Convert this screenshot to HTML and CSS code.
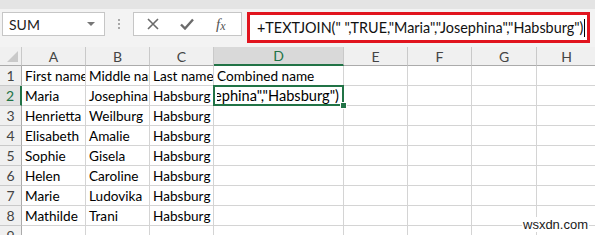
FILE: index.html
```html
<!DOCTYPE html>
<html lang="en">
  <head>
    <meta charset="UTF-8" />
    <title>TEXTJOIN</title>
    <link rel="stylesheet" href="styles.css">
  </head>
  <body>
    <div class="ribbon-edge"></div>
    <div class="toolbar">
      <div class="name-box">
        <span>SUM</span>
        <span class="drop"></span>
      </div>
      <div class="grip"><i></i><i></i><i></i></div>
      <div class="buttons">
        <svg class="btn" width="12" height="12" viewBox="0 0 12 12">
          <path d="M1 1 L11 11 M11 1 L1 11" stroke="#6b6b6b" stroke-width="1.6" fill="none" />
        </svg>
        <svg class="btn" width="14" height="12" viewBox="0 0 14 12">
          <path d="M1 6.5 L5 10.5 L13 1.5" stroke="#6b6b6b" stroke-width="2.4" fill="none" />
        </svg>
        <span class="fx"><i>f</i><small>x</small></span>
      </div>
      <div class="formula">
        <span>+TEXTJOIN(" ",TRUE,"Maria","Josephina","Habsburg")</span><span class="caret"></span>
      </div>
    </div>

    <div class="sheet">
      <div class="corner"></div>
      <div class="col-head">A</div>
      <div class="col-head">B</div>
      <div class="col-head">C</div>
      <div class="col-head sel">D</div>
      <div class="col-head">E</div>
      <div class="col-head">F</div>
      <div class="col-head">G</div>
      <div class="col-head">H</div>

      <div class="row-head">1</div>
      <div class="cell">First name</div>
      <div class="cell">Middle name</div>
      <div class="cell">Last name</div>
      <div class="cell">Combined name</div>
      <div class="cell"></div><div class="cell"></div><div class="cell"></div><div class="cell"></div>

      <div class="row-head sel">2</div>
      <div class="cell">Maria</div>
      <div class="cell">Josephina</div>
      <div class="cell">Habsburg</div>
      <div class="cell active">
        <div class="edit"><span>+TEXTJOIN(" ",TRUE,"Maria","Josephina","Habsburg")</span></div>
        <span class="handle"></span>
      </div>
      <div class="cell"></div><div class="cell"></div><div class="cell"></div><div class="cell"></div>

      <div class="row-head">3</div>
      <div class="cell">Henrietta</div>
      <div class="cell">Weilburg</div>
      <div class="cell">Habsburg</div>
      <div class="cell"></div><div class="cell"></div><div class="cell"></div><div class="cell"></div><div class="cell"></div>

      <div class="row-head">4</div>
      <div class="cell">Elisabeth</div>
      <div class="cell">Amalie</div>
      <div class="cell">Habsburg</div>
      <div class="cell"></div><div class="cell"></div><div class="cell"></div><div class="cell"></div><div class="cell"></div>

      <div class="row-head">5</div>
      <div class="cell">Sophie</div>
      <div class="cell">Gisela</div>
      <div class="cell">Habsburg</div>
      <div class="cell"></div><div class="cell"></div><div class="cell"></div><div class="cell"></div><div class="cell"></div>

      <div class="row-head">6</div>
      <div class="cell">Helen</div>
      <div class="cell">Caroline</div>
      <div class="cell">Habsburg</div>
      <div class="cell"></div><div class="cell"></div><div class="cell"></div><div class="cell"></div><div class="cell"></div>

      <div class="row-head">7</div>
      <div class="cell">Marie</div>
      <div class="cell">Ludovika</div>
      <div class="cell">Habsburg</div>
      <div class="cell"></div><div class="cell"></div><div class="cell"></div><div class="cell"></div><div class="cell"></div>

      <div class="row-head">8</div>
      <div class="cell">Mathilde</div>
      <div class="cell">Trani</div>
      <div class="cell">Habsburg</div>
      <div class="cell"></div><div class="cell"></div><div class="cell"></div><div class="cell"></div><div class="cell"></div>

      <div class="row-head">9</div>
      <div class="cell"></div><div class="cell"></div><div class="cell"></div><div class="cell"></div>
      <div class="cell"></div><div class="cell"></div><div class="cell"></div><div class="cell"></div>
    </div>

    <div class="watermark">wsxdn.com</div>
  </body>
</html>
```

FILE: styles.css
```css
body {
  margin: 0;
  width: 595px;
  height: 235px;
  overflow: hidden;
  position: relative;
  background-color: #ffffff;
  font-family: "Lato", "Liberation Sans", sans-serif;
  color: #000;
}

/* Formula bar */
.ribbon-edge {
  height: 9px;
  background-color: #e4e4e4;
}

.toolbar {
  height: 38px;
  background-color: #f3f3f3;
  display: flex;
  align-items: flex-start;
  padding-top: 3px;
  box-sizing: border-box;
}

.name-box {
  margin-left: 2px;
  width: 103px;
  height: 24px;
  box-sizing: border-box;
  background-color: #fff;
  border: 1px solid #c6c6c6;
  display: flex;
  align-items: center;
  justify-content: space-between;
  padding: 0 9px 0 6px;
  font-size: 14px;
  color: #222;
}

.drop {
  width: 0;
  height: 0;
  border-left: 4px solid transparent;
  border-right: 4px solid transparent;
  border-top: 4px solid #777;
}

.grip {
  width: 28px;
  height: 24px;
  display: flex;
  flex-direction: column;
  align-items: center;
  justify-content: center;
  gap: 2px;
}

.grip i {
  width: 2px;
  height: 2px;
  background-color: #a8a8a8;
}

.buttons {
  width: 109px;
  height: 24px;
  box-sizing: border-box;
  background-color: #fff;
  border: 1px solid #c6c6c6;
  display: flex;
  align-items: center;
  padding-left: 13px;
  margin-right: 5px;
}

.buttons .btn {
  margin-right: 21px;
}

.fx {
  font-family: "Liberation Serif", serif;
  font-size: 15px;
  color: #555;
  margin-left: 1px;
}

.fx small {
  font-style: italic;
  font-size: 12px;
  position: relative;
  top: 1px;
}

.formula {
  width: 343px;
  height: 31px;
  box-sizing: border-box;
  border: 3px solid #e1141e;
  background-color: #fff;
  display: flex;
  align-items: flex-start;
  padding: 4px 0 0 7px;
  font-size: 14.4px;
  white-space: nowrap;
  overflow: hidden;
  color: #111;
}

.caret {
  width: 1px;
  height: 18px;
  background-color: #000;
  margin-left: 1px;
}

/* Sheet grid */
.sheet {
  display: grid;
  grid-template-columns: 22px 64px 64px 64px 130px 64px 64px 65px 60px;
  grid-template-rows: 19px repeat(9, 20px);
  font-size: 13.6px;
}

.corner,
.col-head,
.row-head {
  background-color: #f0f0f0;
  color: #444;
  box-sizing: border-box;
  font-size: 14px;
}

.corner {
  border-right: 1px solid #c9c9c9;
  border-bottom: 1px solid #ababab;
  position: relative;
}

.corner::after {
  content: "";
  position: absolute;
  right: 3px;
  bottom: 3px;
  border-left: 11px solid transparent;
  border-bottom: 11px solid #c9c9c9;
}

.col-head {
  border-right: 1px solid #c9c9c9;
  border-bottom: 1px solid #ababab;
  display: flex;
  align-items: center;
  justify-content: center;
}

.col-head.sel {
  background-color: #d9d9d9;
  color: #217346;
  border-bottom: 2px solid #217346;
}

.row-head {
  border-right: 1px solid #ababab;
  border-bottom: 1px solid #c9c9c9;
  display: flex;
  align-items: center;
  justify-content: center;
}

.row-head.sel {
  background-color: #e2e2e2;
  color: #217346;
  border-right: 2px solid #217346;
}

.cell {
  border-right: 1px solid #d4d4d4;
  border-bottom: 1px solid #d4d4d4;
  box-sizing: border-box;
  padding: 0 0 0 3px;
  white-space: nowrap;
  overflow: hidden;
  display: flex;
  align-items: center;
  min-width: 0;
}

.cell.active {
  position: relative;
  overflow: visible;
  padding: 0 4px 0 3px;
  font-size: 14.6px;
}

.cell.active::before {
  content: "";
  position: absolute;
  left: -1px;
  top: -1px;
  right: -1px;
  bottom: -1px;
  border: 2px solid #217346;
  pointer-events: none;
}

.edit {
  flex: 1;
  min-width: 0;
  display: flex;
  justify-content: flex-end;
  overflow: hidden;
}

.edit span {
  flex: none;
}

.handle {
  position: absolute;
  right: -4px;
  bottom: -4px;
  width: 5px;
  height: 5px;
  background-color: #217346;
  border: 1px solid #fff;
}

/* Overlay */
.watermark {
  position: absolute;
  left: 522px;
  top: 217px;
  padding: 0 1px;
  background-color: #fff;
  font-family: "Liberation Sans", sans-serif;
  font-size: 13px;
  color: #1a1a1a;
}
```
